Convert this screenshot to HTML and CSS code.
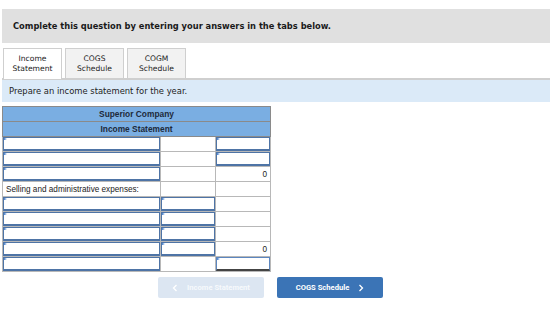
FILE: index.html
```html
<!DOCTYPE html>
<html>
<head>
<meta charset="utf-8">
<link rel="stylesheet" href="styles.css">
</head>
<body>
<div class="page">
  <div class="banner">Complete this question by entering your answers in the tabs below.</div>
  <div class="tabs">
    <div class="tab active">Income<br>Statement</div>
    <div class="tab">COGS<br>Schedule</div>
    <div class="tab">COGM<br>Schedule</div>
  </div>
  <div class="instr">Prepare an income statement for the year.</div>
  <table class="stmt">
    <colgroup><col class="c1"><col class="c2"><col class="c3"></colgroup>
    <tr class="hd"><th colspan="3">Superior Company</th></tr>
    <tr class="hd"><th colspan="3">Income Statement</th></tr>
    <tr><td class="in"><div class="box"></div></td><td class="g"></td><td class="in"><div class="box"></div></td></tr>
    <tr><td class="in"><div class="box"></div></td><td class="g"></td><td class="in"><div class="box"></div></td></tr>
    <tr><td class="in"><div class="box"></div></td><td class="g"></td><td class="g num">0</td></tr>
    <tr><td class="g lbl">Selling and administrative expenses:</td><td class="g"></td><td class="g"></td></tr>
    <tr><td class="in"><div class="box"></div></td><td class="in"><div class="box"></div></td><td class="g"></td></tr>
    <tr><td class="in"><div class="box"></div></td><td class="in"><div class="box"></div></td><td class="g"></td></tr>
    <tr><td class="in"><div class="box"></div></td><td class="in"><div class="box"></div></td><td class="g"></td></tr>
    <tr><td class="in"><div class="box"></div></td><td class="in"><div class="box"></div></td><td class="g num">0</td></tr>
    <tr class="last"><td class="in"><div class="box"></div></td><td class="g"></td><td class="in"><div class="box total"></div></td></tr>
  </table>
  <div class="nav">
    <div class="btn prev"><svg width="6" height="8" viewBox="0 0 6 8"><path d="M4.5 1 L1.5 4 L4.5 7" fill="none" stroke="#fff" stroke-width="1.3"/></svg><span>Income Statement</span></div>
    <div class="btn next"><span>COGS Schedule</span><svg width="6" height="8" viewBox="0 0 6 8"><path d="M1.5 1 L4.5 4 L1.5 7" fill="none" stroke="#fff" stroke-width="1.3"/></svg></div>
  </div>
</div>
</body>
</html>
```
FILE: styles.css
```css
html, body { margin: 0; padding: 0; background: #fff; }
body { font-family: "DejaVu Sans", Verdana, sans-serif; color: #222; }
.page { width: 548px; margin-left: 2px; padding-top: 9px; }
.banner { height: 34px; background: #e0e0e0; display: flex; align-items: center; padding-left: 11px; font-weight: bold; font-size: 8.3px; color: #1a1a1a; }
.tabs { display: flex; gap: 3px; margin-top: 5px; padding-left: 1px; height: 30px; }
.tab { width: 57px; height: 29px; border: 1px solid #cfcfcf; border-bottom: none; background: #f2f2f2; font-size: 7.6px; line-height: 10px; text-align: center; display: flex; align-items: center; justify-content: center; color: #222; }
.tab.active { background: #fff; height: 30px; margin-bottom: -1px; position: relative; z-index: 1; }
.instr { border-top: 2px solid #cfcfcf; height: 22px; background: #dbeaf8; display: flex; align-items: center; padding-left: 7px; font-size: 8.4px; color: #222; }
.stmt { border-collapse: collapse; margin-top: 4px; width: 268px; table-layout: fixed; font-family: "Liberation Sans", Arial, sans-serif; }
.c1 { width: 158px; } .c2 { width: 55px; } .c3 { width: 55px; }
.stmt th { background: #7aaee2; border: 1px solid #8a8a8a; height: 14px; padding: 0; font-size: 8.4px; font-weight: bold; color: #1d2a3a; }
.stmt td { height: 14px; padding: 0; }
.stmt td.g { border: 1px solid #b8b8b8; }
.stmt td.lbl { font-size: 8.2px; padding-left: 3px; color: #222; white-space: nowrap; }
.stmt td.num { text-align: right; font-size: 8.2px; padding-right: 3px; color: #222; }
.stmt td.in { border: 1px solid #b8b8b8; padding: 0; }
.box { position: relative; height: 11px; border: 1px solid #4e74a6; border-bottom: 2px solid #4e74a6; background: #fff; }
.box::before { content: ""; position: absolute; left: 0; top: 0; border-left: 3px solid #3d78c9; border-top: 1.5px solid transparent; border-bottom: 1.5px solid transparent; }
.box.total { border-color: #5c86bf; border-bottom-color: #444; }
.nav { display: flex; gap: 13px; margin-top: 5px; padding-left: 156px; }
.btn { width: 106px; height: 21px; border-radius: 2px; display: flex; align-items: center; justify-content: center; gap: 9px; font-family: Roboto, "Liberation Sans", sans-serif; font-weight: bold; font-size: 7.6px; color: #fff; }
.btn.prev { background: #dce6f2; color: #f6f9fc; }
.btn.next { background: #3b74b6; }
```
